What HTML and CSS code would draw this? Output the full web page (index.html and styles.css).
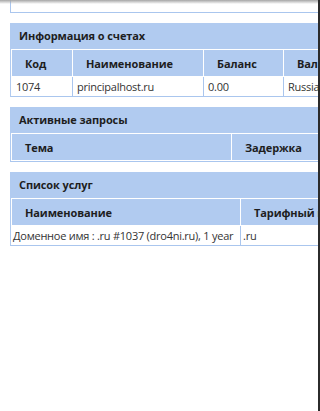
FILE: index.html
```html
<!DOCTYPE html>
<html lang="ru">
<head>
<meta charset="utf-8">
<title>Клиентская панель</title>
<link rel="stylesheet" href="styles.css">
</head>
<body>
<div class="topshade"></div>
<div class="scrollbar"></div>
<div class="page">
  <div class="prev"></div>

  <section class="box">
    <div class="box-title">Информация о счетах</div>
    <table class="grid">
      <colgroup><col class="c-62"><col class="c-131"><col class="c-80"><col class="c-rest"></colgroup>
      <thead><tr><th>Код</th><th>Наименование</th><th>Баланс</th><th>Валюта</th></tr></thead>
      <tbody><tr><td>1074</td><td>principalhost.ru</td><td>0.00</td><td>Russian Ruble</td></tr></tbody>
    </table>
  </section>

  <section class="box">
    <div class="box-title">Активные запросы</div>
    <table class="grid">
      <colgroup><col class="c-221"><col class="c-rest"></colgroup>
      <thead><tr><th>Тема</th><th>Задержка</th></tr></thead>
    </table>
  </section>

  <section class="box">
    <div class="box-title">Список услуг</div>
    <table class="grid grid-services">
      <colgroup><col class="c-230"><col class="c-rest"></colgroup>
      <thead><tr><th>Наименование</th><th>Тарифный план</th></tr></thead>
      <tbody><tr><td>Доменное имя : .ru #1037 (dro4ni.ru), 1 year</td><td>.ru</td></tr></tbody>
    </table>
  </section>
</div>
</body>
</html>
```
FILE: styles.css
```css
html, body {
  margin: 0;
  padding: 0;
  background: #fff;
  overflow: hidden;
}
body {
  font-family: "Open Sans", "Noto Sans", sans-serif;
  color: #222;
}
.page {
  width: 400px;
  padding-left: 10px;
}
.prev {
  height: 12px;
  border-left: 1px solid #aac6ee;
  border-bottom: 1px solid #aac6ee;
  margin-bottom: 10px;
}
.box {
  margin-bottom: 10px;
}
.box-title {
  background: #b1cbf0;
  height: 26px;
  line-height: 26px;
  padding-left: 9px;
  font-size: 11px;
  font-weight: bold;
  letter-spacing: -0.1px;
  color: #1e1e1e;
}
.grid {
  table-layout: fixed;
  width: 100%;
  border-collapse: separate;
  border-spacing: 0;
  border-left: 1px solid #b1cbf0;
  border-bottom: 1px solid #aac6ee;
}
.c-62 { width: 62px; }
.c-131 { width: 131px; }
.c-80 { width: 80px; }
.c-221 { width: 221px; }
.c-230 { width: 230px; }
.grid th {
  background: #b1cbf0;
  border-top: 1px solid #fff;
  border-bottom: 1px solid #fff;
  border-right: 1px solid #fff;
  height: 26px;
  padding: 0 0 0 13px;
  text-align: left;
  font-size: 11px;
  font-weight: bold;
  letter-spacing: -0.1px;
  color: #1e1e1e;
  white-space: nowrap;
  overflow: hidden;
}
.grid th:first-child {
  border-left: 1px solid #fff;
}
.grid td {
  border-right: 1px solid #aac6ee;
  height: 19px;
  padding: 0 0 0 4px;
  font-size: 11px;
  letter-spacing: -0.25px;
  color: #333;
  white-space: nowrap;
  overflow: hidden;
}
.grid td:first-child {
  padding-left: 5px;
}
.grid-services td {
  padding-left: 2px;
}
.grid-services td:first-child {
  padding-left: 2px;
}
.topshade {
  position: fixed;
  top: 0;
  left: 0;
  right: 0;
  height: 4px;
  background: linear-gradient(#a5a5a5, rgba(255,255,255,0));
  z-index: 2;
}
.scrollbar {
  position: fixed;
  top: 0;
  right: 0;
  bottom: 0;
  width: 2px;
  background: #2b2b2b;
  z-index: 3;
}
```
